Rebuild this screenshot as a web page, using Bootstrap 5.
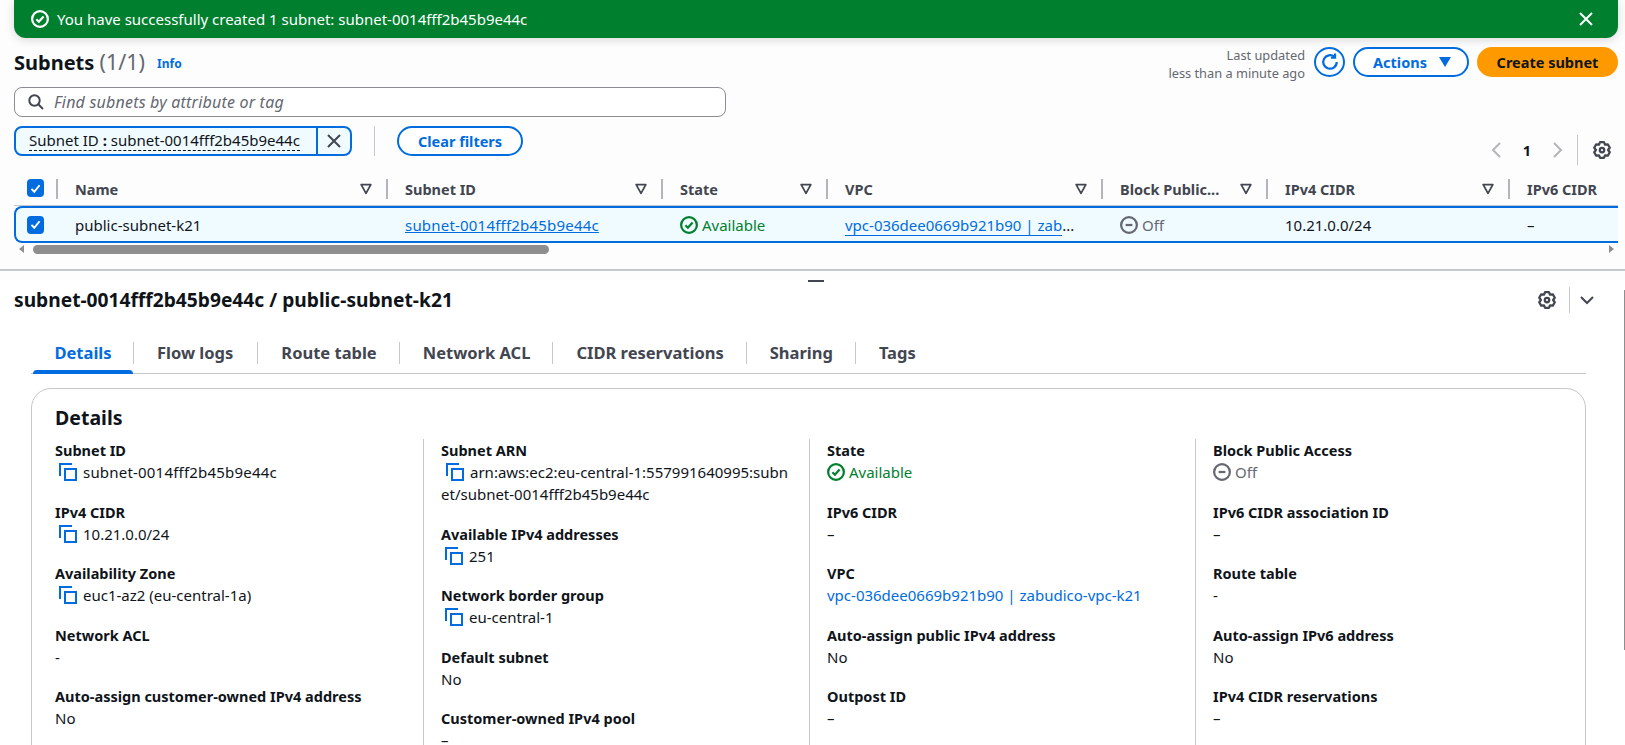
<!DOCTYPE html>
<html>
<head>
    <title>Subnets</title>
    <link rel="stylesheet" href="https://cdn.jsdelivr.net/npm/bootstrap@5.3.0/dist/css/bootstrap.min.css">
    <style>
        /* Global styles */
        html, body { height: 745px; overflow: hidden; }
        body {
            font-family: "Noto Sans", "Liberation Sans", sans-serif;
            font-size: 15px;
            line-height: 22px;
            color: #0f141a;
            background-color: #fdfdfd;
        }
        svg { display: block; flex: none; fill: none; stroke: currentColor; stroke-width: 2; }
        a { color: #006ce0; }
        .ic16 { width: 16px; height: 16px; }
        .ic18 { width: 18px; height: 18px; }
        .ink-blue { color: #006ce0; }
        .ink-green { color: #00802f; }
        .ink-gray { color: #656871; }
        .ink-dark { color: #424650; }
        .id-text { letter-spacing: .2px; }

        /* Flash */
        .top-pane { padding: 0 7px 0 14px; height: 269px; }
        .flash {
            height: 38px;
            padding: 0 20px 0 17px;
            background-color: #00802f;
            color: #fff;
            border-radius: 0 0 12px 12px;
            box-shadow: 0 2px 10px rgba(0, 0, 0, .15);
        }

        /* Page header */
        .page-head { height: 30px; margin-top: 9px; }
        .page-title { font-size: 20px; font-weight: 700; line-height: 30px; margin: 0; padding-top: 1px; }
        .page-title span { font-size: 21.5px; font-weight: 400; color: #656871; }
        .info-link { font-size: 12px; font-weight: 700; margin: 4px 0 0 12px; text-decoration: none; }
        .updated { font-size: 12.8px; line-height: 18px; color: #656871; text-align: right; margin-right: 9px; padding-top: 3px; }
        .round-btn {
            width: 31px; height: 30px; padding: 0; color: #006ce0; background: #fff;
            border: 2px solid #006ce0; border-radius: 50%;
        }
        .pill-btn {
            height: 30px; padding: 0 18px; font-size: 14.5px; line-height: 26px; font-weight: 700;
            color: #006ce0; background: #fff; border: 2px solid #006ce0; border-radius: 15px;
        }
        .pill-btn:hover { color: #006ce0; background: #fff; border-color: #006ce0; }
        .orange-btn { background: #ff9900; border-color: #ff9900; color: #0f141a; }
        .orange-btn:hover { background: #ff9900; border-color: #ff9900; color: #0f141a; }
        .actions-btn { width: 116px; padding: 0 16px 0 18px; }
        .create-btn { width: 141px; padding: 0; }
        .clear-btn { width: 126px; padding: 0; }

        /* Filters */
        .search-box {
            width: 712px; height: 30px; margin-top: 10px; padding-left: 13px;
            background: #fff; border: 1px solid #8c8c94; border-radius: 8px;
        }
        .search-box span { font-size: 16px; letter-spacing: .2px; font-style: italic; color: #656871; margin-left: 10px; }
        .filter-row { margin-top: 9px; height: 39px; }
        .token {
            width: 338px; height: 30px; background: #f0fbff;
            border: 2px solid #006ce0; border-radius: 8px;
        }
        .token-text { width: 302px; padding-left: 13px; border-right: 2px solid #006ce0; height: 26px; line-height: 25px; white-space: nowrap; }
        .token-text span { border-bottom: 1px dashed #0f141a; }
        .token-x { width: 32px; }
        .v-sep { width: 1px; height: 30px; margin: 0 22px; background: #c6c6cd; }
        .pager { margin-top: 9px; height: 30px; color: #b4b4bb; }
        .pager-num { width: 50px; text-align: center; font-size: 14.5px; font-weight: 700; color: #0f141a; }
        .pager-sep { width: 1px; height: 30px; margin: 0 15px 0 13px; background: #c6c6cd; }
        .pager-gear { margin-right: 7px; }

        /* Table as grid */
        .grid-cols { display: grid; grid-template-columns: 42px 330px 275px 165px 275px 165px 242px 110px; }
        .grid-head { margin-top: 14px; height: 27px; border-bottom: 1px solid #c6c6cd; }
        .head-cell {
            height: 20px; line-height: 20px; padding: 0 13px 0 17px; font-size: 14.5px; font-weight: 700; color: #424650;
            border-left: 2px solid #b4b4bb; white-space: nowrap;
        }
        .head-cell svg { width: 14px; height: 14px; }
        .head-cell.last { padding-right: 0; }
        .check-cell { padding-left: 13px; height: 18px; }
        .tick {
            width: 17px; height: 18px; background: #006ce0; border-radius: 4px; color: #fff;
        }
        .tick svg { width: 13px; height: 13px; stroke-width: 2.4; }
        .grid-row {
            height: 37px; background: #f0fbff; align-items: center;
            border-top: 2px solid #006ce0; border-bottom: 2px solid #006ce0; border-left: 2px solid #006ce0;
            border-radius: 8px 0 0 8px;
        }
        .row-cell { padding-left: 17px; white-space: nowrap; }
        .row-check { padding-left: 11px; }
        .row-vpc { border-bottom: 1px solid #006ce0; line-height: 19px; display: inline-block; text-decoration: none; }

        /* Horizontal scrollbar */
        .h-scroll { height: 12px; }
        .h-thumb { width: 516px; height: 9px; margin-left: 9px; background: #8e8e8e; border-radius: 5px; }
        .arrow-l { width: 0; height: 0; margin-left: 5px; border: 4px solid transparent; border-left: 0; border-right: 5px solid #8e8e8e; }
        .arrow-r { width: 0; height: 0; margin-left: auto; margin-right: 4px; border: 4px solid transparent; border-right: 0; border-left: 5px solid #8e8e8e; }

        /* Lower pane */
        .split-bar { height: 2px; background: #c6c6cd; }
        .split-handle { width: 16px; height: 2px; margin: 9px 0 0 808px; background: #424650; }
        .low-pane { background: #fff; height: 476px; }
        .low-head { height: 26px; margin-top: 5px; padding: 0 30px 0 14px; }
        .low-title { font-size: 19.2px; font-weight: 700; line-height: 26px; margin: 0; }
        .low-sep { width: 1px; height: 26px; margin: 0 9px 0 13px; background: #c6c6cd; }

        /* Tabs */
        .tab-strip { margin: 29px 39px 0 31px; height: 32px; border-bottom: 1px solid #c6c6cd; position: relative; }
        .tab-item {
            height: 22px; padding: 0 22px 0 23px; border-right: 1px solid #c6c6cd;
            font-size: 16.5px; line-height: 22px; font-weight: 700; color: #424650; white-space: nowrap;
        }
        .tab-item:nth-child(3) { padding-right: 24px; }
        .tab-item:last-child { border-right: 0; }
        .tab-item.now { color: #006ce0; margin-left: 2px; width: 101px; }
        .tab-bar { position: absolute; left: 2px; bottom: -1px; width: 100px; height: 4px; background: #006ce0; border-radius: 4px 4px 0 0; }

        /* Details card */
        .details-box {
            margin: 14px 39px 0 31px; padding: 16px 24px 60px 23px;
            background: #fff; border: 1px solid #c6c6cd; border-radius: 20px;
        }
        .details-title { font-size: 19.5px; font-weight: 700; line-height: 26px; margin: 0 0 8px; }
        .dtl-col { flex: none; width: 386px; padding: 0 0 60px 17px; border-left: 1px solid #c6c6cd; }
        .dtl-col:first-child { width: 368px; padding-left: 0; border-left: 0; }
        .dtl-col:last-child { flex: 1 1 0; width: auto; }
        .dtl-item { margin-bottom: 17.5px; }
        .dtl-item dt { font-size: 14.5px; font-weight: 700; }
        .dtl-item dd { margin: 0; }
        .copy-line { padding-left: 4px; gap: 6px; }
        .copy-line svg { color: #006ce0; width: 18px; height: 18px; }
        .copy-inline svg { display: inline-block; vertical-align: -3px; color: #006ce0; width: 18px; height: 18px; margin: 0 6px 0 5px; }
        .v-thumb { position: absolute; top: 290px; right: 0; width: 1px; height: 360px; background: #8e8e8e; }
    </style>
</head>
<body class="position-relative">
    <!-- Icons used more than once -->
    <svg width="0" height="0" class="position-absolute">
        <symbol id="i-ok" viewBox="0 0 16 16"><circle cx="8" cy="8" r="7"/><path d="M4.8 8.2l2.2 2.2 4.2-4.6"/></symbol>
        <symbol id="i-off" viewBox="0 0 16 16"><circle cx="8" cy="8" r="7"/><path d="M5 8h6"/></symbol>
        <symbol id="i-x" viewBox="0 0 16 16"><path d="M2 2l12 12M14 2L2 14"/></symbol>
        <symbol id="i-tick" viewBox="0 0 16 16"><path d="M3 8.5l3.5 3.5L13 4"/></symbol>
        <symbol id="i-filter" viewBox="0 0 16 16"><path d="M2.5 3h11L8 13z" stroke-linejoin="round"/></symbol>
        <symbol id="i-copy" viewBox="0 0 18 18"><path d="M1 13V1h12"/><rect x="6" y="6" width="11" height="11"/></symbol>
        <symbol id="i-gear" viewBox="0 0 16 16"><path stroke-linejoin="round" d="M6.26 1.01h3.48l.96 2.31 2.48-.32 1.74 3.02L13.4 8l1.52 1.98L13.18 13l-2.48-.32-.96 2.31H6.26l-.96-2.31-2.48.32-1.74-3.02L2.6 8 1.08 6.02 2.82 3l2.48.32z"/><circle cx="8" cy="8" r="2"/></symbol>
    </svg>

    <!-- Upper pane: subnet list -->
    <div class="top-pane">
        <div class="flash d-flex align-items-center justify-content-between">
            <div class="d-flex align-items-center gap-2">
                <svg class="ic18"><use href="#i-ok"/></svg>
                <span>You have successfully created 1 subnet: subnet-0014fff2b45b9e44c</span>
            </div>
            <svg class="ic16 me-1"><use href="#i-x"/></svg>
        </div>

        <div class="page-head d-flex align-items-center justify-content-between">
            <div class="d-flex align-items-center">
                <h1 class="page-title">Subnets <span>(1/1)</span></h1>
                <a href="#" class="info-link">Info</a>
            </div>
            <div class="d-flex align-items-center">
                <div class="updated">Last updated<br>less than a minute ago</div>
                <button class="btn round-btn d-flex align-items-center justify-content-center">
                    <svg class="ic18" viewBox="0 0 16 16"><path d="M14 8a6 6 0 1 1-2-4.5"/><path d="M12.5 0.5v3.6H8.8"/></svg>
                </button>
                <button class="btn pill-btn d-flex align-items-center ms-2 actions-btn">
                    Actions
                    <svg class="ms-auto" width="12" height="10" viewBox="0 0 12 10"><path d="M0 0h12L6 10z" fill="#006ce0" stroke="none"/></svg>
                </button>
                <button class="btn pill-btn orange-btn ms-2 create-btn">Create subnet</button>
            </div>
        </div>

        <div class="search-box d-flex align-items-center">
            <svg class="ic16 ink-dark" viewBox="0 0 16 16"><circle cx="6.5" cy="6.5" r="5.2"/><path d="M10.5 10.5L15 15"/></svg>
            <span>Find subnets by attribute or tag</span>
        </div>

        <div class="filter-row d-flex align-items-start">
            <div class="token d-flex align-items-center">
                <div class="token-text"><span>Subnet ID <b>:</b> subnet-0014fff2b45b9e44c</span></div>
                <div class="token-x d-flex justify-content-center ink-dark"><svg class="ic16"><use href="#i-x"/></svg></div>
            </div>
            <div class="v-sep"></div>
            <button class="btn pill-btn clear-btn">Clear filters</button>
            <div class="pager d-flex align-items-center ms-auto">
                <svg width="12" height="18" viewBox="0 0 12 18"><path d="M10 2L3 9l7 7"/></svg>
                <div class="pager-num">1</div>
                <svg width="12" height="18" viewBox="0 0 12 18"><path d="M2 2l7 7-7 7"/></svg>
                <div class="pager-sep"></div>
                <svg class="ic18 ink-dark pager-gear"><use href="#i-gear"/></svg>
            </div>
        </div>

        <div class="grid-cols grid-head overflow-hidden">
            <div class="check-cell"><div class="tick d-flex align-items-center justify-content-center"><svg><use href="#i-tick"/></svg></div></div>
            <div class="head-cell d-flex align-items-center justify-content-between">Name<svg class="ink-dark"><use href="#i-filter"/></svg></div>
            <div class="head-cell d-flex align-items-center justify-content-between">Subnet ID<svg class="ink-dark"><use href="#i-filter"/></svg></div>
            <div class="head-cell d-flex align-items-center justify-content-between">State<svg class="ink-dark"><use href="#i-filter"/></svg></div>
            <div class="head-cell d-flex align-items-center justify-content-between">VPC<svg class="ink-dark"><use href="#i-filter"/></svg></div>
            <div class="head-cell d-flex align-items-center justify-content-between">Block Public...<svg class="ink-dark"><use href="#i-filter"/></svg></div>
            <div class="head-cell d-flex align-items-center justify-content-between">IPv4 CIDR<svg class="ink-dark"><use href="#i-filter"/></svg></div>
            <div class="head-cell last">IPv6 CIDR</div>
        </div>

        <div class="grid-cols grid-row">
            <div class="row-check"><div class="tick d-flex align-items-center justify-content-center"><svg><use href="#i-tick"/></svg></div></div>
            <div class="row-cell">public-subnet-k21</div>
            <div class="row-cell"><a href="#" class="id-text">subnet-0014fff2b45b9e44c</a></div>
            <div class="row-cell d-flex align-items-center gap-1 ink-green"><svg class="ic18"><use href="#i-ok"/></svg>Available</div>
            <div class="row-cell"><a href="#" class="row-vpc">vpc-036dee0669b921b90 | zab</a>...</div>
            <div class="row-cell d-flex align-items-center gap-1 ink-gray"><svg class="ic18"><use href="#i-off"/></svg>Off</div>
            <div class="row-cell">10.21.0.0/24</div>
            <div class="row-cell">–</div>
        </div>

        <div class="h-scroll d-flex align-items-center">
            <div class="arrow-l"></div>
            <div class="h-thumb"></div>
            <div class="arrow-r"></div>
        </div>
    </div>

    <div class="split-bar"></div>

    <!-- Lower pane: subnet details -->
    <div class="low-pane">
        <div class="split-handle"></div>
        <div class="low-head d-flex align-items-center justify-content-between">
            <h2 class="low-title">subnet-0014fff2b45b9e44c / public-subnet-k21</h2>
            <div class="d-flex align-items-center ink-dark">
                <svg class="ic18"><use href="#i-gear"/></svg>
                <div class="low-sep"></div>
                <svg class="ic16" viewBox="0 0 16 16"><path d="M2 5l6 6 6-6"/></svg>
            </div>
        </div>

        <div class="tab-strip nav">
            <div class="tab-bar"></div>
            <div class="tab-item now text-center px-0">Details</div>
            <div class="tab-item">Flow logs</div>
            <div class="tab-item">Route table</div>
            <div class="tab-item">Network ACL</div>
            <div class="tab-item">CIDR reservations</div>
            <div class="tab-item">Sharing</div>
            <div class="tab-item">Tags</div>
        </div>

        <div class="details-box">
            <h3 class="details-title">Details</h3>
            <div class="d-flex">
                <dl class="dtl-col m-0">
                    <div class="dtl-item"><dt>Subnet ID</dt><dd class="copy-line d-flex align-items-center"><svg><use href="#i-copy"/></svg><span class="id-text">subnet-0014fff2b45b9e44c</span></dd></div>
                    <div class="dtl-item"><dt>IPv4 CIDR</dt><dd class="copy-line d-flex align-items-center"><svg><use href="#i-copy"/></svg>10.21.0.0/24</dd></div>
                    <div class="dtl-item"><dt>Availability Zone</dt><dd class="copy-line d-flex align-items-center"><svg><use href="#i-copy"/></svg>euc1-az2 (eu-central-1a)</dd></div>
                    <div class="dtl-item"><dt>Network ACL</dt><dd>-</dd></div>
                    <div class="dtl-item"><dt>Auto-assign customer-owned IPv4 address</dt><dd>No</dd></div>
                </dl>
                <dl class="dtl-col m-0">
                    <div class="dtl-item"><dt>Subnet ARN</dt><dd class="copy-inline"><svg><use href="#i-copy"/></svg>arn:aws:ec2:eu-central-1:557991640995:subn<br>et/subnet-0014fff2b45b9e44c</dd></div>
                    <div class="dtl-item"><dt>Available IPv4 addresses</dt><dd class="copy-line d-flex align-items-center"><svg><use href="#i-copy"/></svg>251</dd></div>
                    <div class="dtl-item"><dt>Network border group</dt><dd class="copy-line d-flex align-items-center"><svg><use href="#i-copy"/></svg>eu-central-1</dd></div>
                    <div class="dtl-item"><dt>Default subnet</dt><dd>No</dd></div>
                    <div class="dtl-item"><dt>Customer-owned IPv4 pool</dt><dd>–</dd></div>
                </dl>
                <dl class="dtl-col m-0">
                    <div class="dtl-item"><dt>State</dt><dd class="d-flex align-items-center gap-1 ink-green"><svg class="ic18"><use href="#i-ok"/></svg>Available</dd></div>
                    <div class="dtl-item"><dt>IPv6 CIDR</dt><dd>–</dd></div>
                    <div class="dtl-item"><dt>VPC</dt><dd><a href="#" class="text-decoration-none">vpc-036dee0669b921b90 | zabudico-vpc-k21</a></dd></div>
                    <div class="dtl-item"><dt>Auto-assign public IPv4 address</dt><dd>No</dd></div>
                    <div class="dtl-item"><dt>Outpost ID</dt><dd>–</dd></div>
                </dl>
                <dl class="dtl-col m-0">
                    <div class="dtl-item"><dt>Block Public Access</dt><dd class="d-flex align-items-center gap-1 ink-gray"><svg class="ic18"><use href="#i-off"/></svg>Off</dd></div>
                    <div class="dtl-item"><dt>IPv6 CIDR association ID</dt><dd>–</dd></div>
                    <div class="dtl-item"><dt>Route table</dt><dd>-</dd></div>
                    <div class="dtl-item"><dt>Auto-assign IPv6 address</dt><dd>No</dd></div>
                    <div class="dtl-item"><dt>IPv4 CIDR reservations</dt><dd>–</dd></div>
                </dl>
            </div>
        </div>
    </div>
    <div class="v-thumb"></div>
</body>
</html>
